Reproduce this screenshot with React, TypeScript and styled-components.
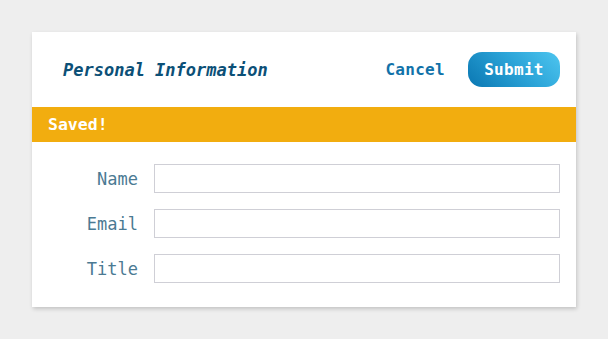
import { Fragment } from 'react'
import styled, { createGlobalStyle } from 'styled-components'

const GlobalStyle = createGlobalStyle`
  html, body {
    margin: 0;
    padding: 0;
    background: #eeeeee;
  }
  body {
    font-family: 'DejaVu Sans Mono', 'Liberation Mono', monospace;
  }
`

const Page = styled.div`
  padding: 32px;
`

const Card = styled.div`
  width: 544px;
  background: #ffffff;
  box-shadow: 1px 2px 4px rgba(0, 0, 0, 0.18);
`

const Header = styled.div`
  height: 75px;
  display: flex;
  align-items: center;
  padding: 0 16px 0 31px;
  box-sizing: border-box;
`

const Title = styled.h2`
  flex: 1;
  margin: 0;
  font-size: 17px;
  font-style: italic;
  font-weight: bold;
  color: #0c5077;
`

const TextButton = styled.button`
  border: none;
  background: none;
  font-family: inherit;
  font-size: 16px;
  font-weight: bold;
  color: #1172a9;
  padding: 0;
  margin-right: 23px;
  letter-spacing: 0.3px;
  cursor: pointer;
`

const PrimaryButton = styled.button`
  width: 92px;
  height: 35px;
  border: none;
  border-radius: 14px;
  background: linear-gradient(45deg, #0a77b2 0%, #2ba4d8 55%, #4ec5ef 100%);
  color: #ffffff;
  font-family: inherit;
  font-size: 16px;
  font-weight: bold;
  letter-spacing: 0.3px;
  cursor: pointer;
`

const Banner = styled.div`
  height: 35px;
  display: flex;
  align-items: center;
  padding-left: 16px;
  background: #f2ad0f;
  color: #ffffff;
  font-size: 16.5px;
  font-weight: bold;
`

const Form = styled.form`
  display: grid;
  grid-template-columns: 90px 1fr;
  column-gap: 16px;
  row-gap: 16px;
  align-items: center;
  padding: 22px 16px 24px 16px;
`

const Label = styled.label`
  text-align: right;
  font-size: 17px;
  color: #4b7a93;
`

const Input = styled.input`
  height: 29px;
  box-sizing: border-box;
  border: 1px solid #cfcfd6;
  border-radius: 0;
  font-family: inherit;
  font-size: 15px;
  padding: 0 6px;
  outline: none;
`

const fields = ['Name', 'Email', 'Title']

export default function App() {
  return (
    <Page>
      <GlobalStyle />
      <Card>
        <Header>
          <Title>Personal Information</Title>
          <TextButton type="button">Cancel</TextButton>
          <PrimaryButton type="button">Submit</PrimaryButton>
        </Header>
        <Banner>Saved!</Banner>
        <Form>
          {fields.map((field) => (
            <Fragment key={field}>
              <Label htmlFor={field}>{field}</Label>
              <Input id={field} type="text" />
            </Fragment>
          ))}
        </Form>
      </Card>
    </Page>
  )
}
